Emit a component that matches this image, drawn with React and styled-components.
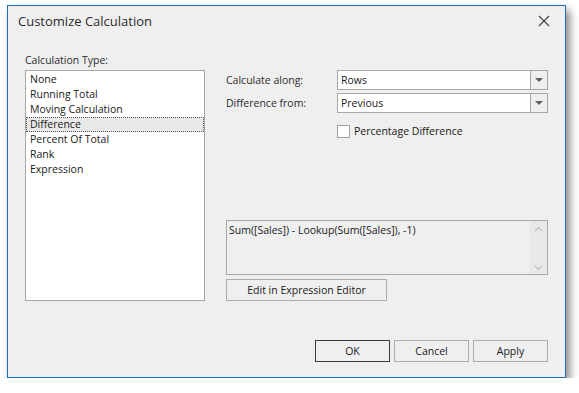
import React from 'react'
import styled, { createGlobalStyle } from 'styled-components'

const Global = createGlobalStyle`
  body {
    margin: 0;
    background: #ffffff;
    font-family: "Segoe UI", "Open Sans", "Liberation Sans", sans-serif;
    font-size: 10.5px;
    color: #202020;
  }
`

const Dialog = styled.div`
  margin: 5px 0 0 7px;
  width: 557px;
  height: 371px;
  border: 1px solid #1b6ec2;
  background: #efefef;
  box-shadow: 4px 5px 8px rgba(0, 0, 0, 0.45);
  display: flex;
  flex-direction: column;
`

const TitleBar = styled.div`
  height: 30px;
  display: flex;
  align-items: center;
  justify-content: space-between;
  padding: 0 14px 0 10px;
`

const Title = styled.div`
  font-size: 13px;
  color: #2b2b2b;
`

const CloseButton = styled.div`
  width: 14px;
  height: 14px;
  display: flex;
  align-items: center;
  justify-content: center;
`

const Body = styled.div`
  flex: 1;
  display: flex;
  gap: 21px;
  padding: 17px 17px 0 17px;
`

const LeftColumn = styled.div`
  width: 180px;
  display: flex;
  flex-direction: column;
`

const Label = styled.div`
  height: 17px;
  line-height: 14px;
  color: #2b2b2b;
`

const ListBox = styled.div`
  height: 228px;
  border: 1px solid #a7a7a7;
  background: #ffffff;
  padding-top: 1px;
`

const ListItem = styled.div`
  height: 15px;
  padding-left: 3px;
  box-sizing: border-box;
  border: 1px dotted ${p => (p.selected ? '#555' : 'transparent')};
  background: ${p => (p.selected ? '#e8e8e8' : 'transparent')};
  line-height: 13px;
`

const RightColumn = styled.div`
  width: 322px;
  display: flex;
  flex-direction: column;
  padding-top: 17px;
`

const FieldRow = styled.div`
  display: flex;
  align-items: center;
  margin-bottom: ${p => p.mb || 0}px;
`

const FieldLabel = styled.div`
  width: 111px;
  color: #2b2b2b;
`

const Combo = styled.div`
  flex: 1;
  height: 18px;
  border: 1px solid #a7a7a7;
  background: #ffffff;
  display: flex;
`

const ComboText = styled.div`
  flex: 1;
  padding-left: 3px;
  line-height: 18px;
`

const ComboButton = styled.div`
  width: 16px;
  border-left: 1px solid #a7a7a7;
  background: #efefef;
  display: flex;
  align-items: center;
  justify-content: center;
`

const Arrow = styled.div`
  width: 0;
  height: 0;
  border-left: 4px solid transparent;
  border-right: 4px solid transparent;
  border-top: 4px solid #606060;
`

const CheckRow = styled.div`
  display: flex;
  align-items: center;
  gap: 4px;
  margin: 11px 0 0 111px;
`

const CheckBox = styled.div`
  width: 11px;
  height: 11px;
  border: 1px solid #a0a0a0;
  background: #ffffff;
`

const ExpressionBox = styled.div`
  margin-top: 82px;
  height: 53px;
  border: 1px solid #a7a7a7;
  display: flex;
`

const ExpressionText = styled.div`
  flex: 1;
  padding: 2px 2px;
`

const ScrollTrack = styled.div`
  width: 17px;
  background: #e8e8e8;
  display: flex;
  flex-direction: column;
  justify-content: space-between;
  align-items: center;
  padding: 5px 0 3px;
`

const Button = styled.div`
  width: ${p => p.w}px;
  height: 20px;
  border: 1px solid ${p => (p.primary ? '#3c3c3c' : '#acacac')};
  background: #efefef;
  display: flex;
  align-items: center;
  justify-content: center;
  color: #202020;
`

const EditRow = styled.div`
  margin-top: 4px;
`

const Footer = styled.div`
  display: flex;
  justify-content: flex-end;
  gap: 4px;
  padding: 0 17px 15px 0;
`

const Chevron = ({ up }) => (
  <svg width="9" height="6" viewBox="0 0 9 6">
    <path
      d={up ? 'M1 5 L4.5 1.5 L8 5' : 'M1 1 L4.5 4.5 L8 1'}
      fill="none"
      stroke="#bdbdbd"
      strokeWidth="1.2"
    />
  </svg>
)

const types = [
  'None',
  'Running Total',
  'Moving Calculation',
  'Difference',
  'Percent Of Total',
  'Rank',
  'Expression',
]

export default function App() {
  return (
    <>
      <Global />
      <Dialog>
        <TitleBar>
          <Title>Customize Calculation</Title>
          <CloseButton>
            <svg width="12" height="12" viewBox="0 0 12 12">
              <path d="M1 1 L11 11 M11 1 L1 11" stroke="#444" strokeWidth="1.1" />
            </svg>
          </CloseButton>
        </TitleBar>
        <Body>
          <LeftColumn>
            <Label>Calculation Type:</Label>
            <ListBox>
              {types.map(t => (
                <ListItem key={t} selected={t === 'Difference'}>
                  {t}
                </ListItem>
              ))}
            </ListBox>
          </LeftColumn>
          <RightColumn>
            <FieldRow mb={3}>
              <FieldLabel>Calculate along:</FieldLabel>
              <Combo>
                <ComboText>Rows</ComboText>
                <ComboButton>
                  <Arrow />
                </ComboButton>
              </Combo>
            </FieldRow>
            <FieldRow>
              <FieldLabel>Difference from:</FieldLabel>
              <Combo>
                <ComboText>Previous</ComboText>
                <ComboButton>
                  <Arrow />
                </ComboButton>
              </Combo>
            </FieldRow>
            <CheckRow>
              <CheckBox />
              <span>Percentage Difference</span>
            </CheckRow>
            <ExpressionBox>
              <ExpressionText>Sum([Sales]) - Lookup(Sum([Sales]), -1)</ExpressionText>
              <ScrollTrack>
                <Chevron up />
                <Chevron />
              </ScrollTrack>
            </ExpressionBox>
            <EditRow>
              <Button w={159}>Edit in Expression Editor</Button>
            </EditRow>
          </RightColumn>
        </Body>
        <Footer>
          <Button w={73} primary>
            OK
          </Button>
          <Button w={73}>Cancel</Button>
          <Button w={73}>Apply</Button>
        </Footer>
      </Dialog>
    </>
  )
}
